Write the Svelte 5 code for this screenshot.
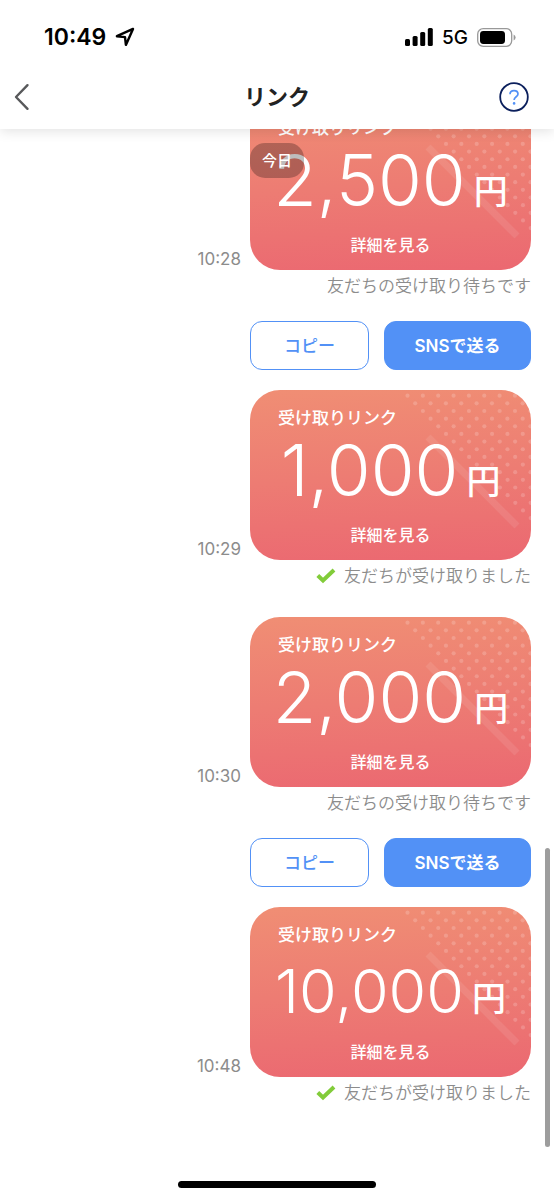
<script>
  const links = [
    { time: '10:28', amount: '2,500', received: false },
    { time: '10:29', amount: '1,000', received: true },
    { time: '10:30', amount: '2,000', received: false },
    { time: '10:48', amount: '10,000', received: true },
  ];

  // Triangular dot field in the upper right of each card: every row starts one half-step further right.
  const dots = [];
  for (let row = 0; row < 17; row++) {
    for (let x = 157.5 + row * 7.7; x < 284; x += 15.35) {
      dots.push({ x, y: 5.7 + row * 7.65 });
    }
  }
</script>

<div class="screen">
  <header>
    <div class="status">
      <div class="group">
        <span class="clock">10:49</span>
        <svg width="20" height="20" viewBox="0 0 20 20" aria-hidden="true">
          <path d="M18 1.9 1.9 9.2 10 10.1 10.9 17.9Z" fill="none" stroke="#000" stroke-width="2.4" stroke-linejoin="round" />
        </svg>
      </div>
      <div class="group right">
        <svg width="28" height="18" viewBox="0 0 28 18" aria-hidden="true">
          <rect x="0" y="11" width="5" height="7" rx="1.5" />
          <rect x="7.6" y="8" width="5" height="10" rx="1.5" />
          <rect x="15.2" y="4" width="5" height="14" rx="1.5" />
          <rect x="22.8" y="0" width="5" height="18" rx="1.5" />
        </svg>
        <span class="network">5G</span>
        <svg width="39" height="19" viewBox="0 0 39 19" aria-hidden="true">
          <rect x="0.7" y="0.7" width="34" height="17.6" rx="5.5" fill="none" stroke="#999" stroke-width="1.3" />
          <rect x="3" y="3" width="25" height="13" rx="3.4" />
          <path d="M36.6 6.5Q38.6 7.3 38.6 9.5T36.6 12.5Z" fill="#999" />
        </svg>
      </div>
    </div>
    <nav>
      <button class="icon" aria-label="戻る">
        <svg width="16" height="28" viewBox="0 0 16 28" aria-hidden="true">
          <path d="M13.5 2.2 2 14 13.5 25.8" fill="none" stroke="#58595b" stroke-width="2.4" stroke-linecap="round" stroke-linejoin="round" />
        </svg>
      </button>
      <h1>リンク</h1>
      <button class="icon help" aria-label="ヘルプ">
        <svg width="30" height="30" viewBox="0 0 30 30" aria-hidden="true">
          <circle cx="15" cy="15" r="13.8" fill="none" stroke="#0b1f5c" stroke-width="1.8" />
          <path d="M11 12.3C11 9.8 12.7 8.6 15 8.6S19 10 19 12C19 14.8 15.1 14.8 15.1 18" fill="none" stroke="#5291f6" stroke-width="1.7" />
          <circle cx="15.1" cy="21.4" r="1.3" fill="#5291f6" />
        </svg>
      </button>
    </nav>
  </header>

  <main>
    <span class="date">今日</span>
    {#each links as link}
      <article>
        <div class="row">
          <time>{link.time}</time>
          <section class="card">
            <svg class="pattern" width="281" height="170" viewBox="0 0 281 170" aria-hidden="true">
              {#each dots as dot}
                <circle cx={dot.x} cy={dot.y} r="2.1" fill="#fff" fill-opacity="0.18" />
              {/each}
              <path d="M178 47 267 136" stroke="#fff" stroke-opacity="0.09" stroke-width="7" />
            </svg>
            <h2>受け取りリンク</h2>
            <p class="amount"><span class="digits" class:long={link.amount.length > 5}>{link.amount}</span><span class="yen">円</span></p>
            <a href="#detail">詳細を見る</a>
          </section>
        </div>
        <p class="state">
          {#if link.received}
            <svg width="20" height="16" viewBox="0 0 20 16" aria-hidden="true">
              <path d="M1.8 7.5 7 12.5 18 2" fill="none" stroke="#82cc3a" stroke-width="4" />
            </svg>
            友だちが受け取りました
          {:else}
            友だちの受け取り待ちです
          {/if}
        </p>
        {#if !link.received}
          <div class="actions">
            <button class="copy">コピー</button>
            <button class="send">SNSで送る</button>
          </div>
        {/if}
      </article>
    {/each}
    <div class="thumb"></div>
  </main>

  <footer><div class="home"></div></footer>
</div>

<style>
  :global(body) {
    margin: 0;
    background: #fff;
  }
  .screen {
    display: flex;
    flex-direction: column;
    height: 100vh;
    overflow: hidden;
    font-family: Inter, "Noto Sans CJK JP", sans-serif;
    color: #222;
  }
  h1, h2, p {
    margin: 0;
  }
  button {
    font: inherit;
    cursor: pointer;
  }
  svg {
    display: block;
    flex: none;
  }
  header {
    position: relative;
    z-index: 2;
    flex: none;
    background: #fff;
    box-shadow: 0 2px 12px rgba(0, 0, 0, 0.12);
  }
  .status {
    display: flex;
    justify-content: space-between;
    align-items: center;
    padding: 22px 38px 0 44px;
    height: 30px;
    color: #000;
  }
  .group {
    display: flex;
    align-items: center;
    gap: 9px;
  }
  .clock {
    font-size: 23px;
    font-weight: 600;
  }
  .network {
    font-size: 19px;
    font-weight: 500;
  }
  nav {
    display: grid;
    grid-template-columns: 60px 1fr 60px;
    align-items: center;
    height: 64px;
    padding-top: 13px;
  }
  h1 {
    font-size: 22px;
    font-weight: 700;
    line-height: 32px;
    text-align: center;
  }
  .icon {
    display: flex;
    padding: 0 0 0 14px;
    border: 0;
    background: none;
  }
  .help {
    padding: 0 25px 0 5px;
  }
  main {
    position: relative;
    flex: 1;
    min-height: 0;
    display: flex;
    flex-direction: column;
    justify-content: flex-end;
    gap: 25px;
    padding: 0 23px 41px;
    overflow: hidden;
  }
  .date {
    position: absolute;
    z-index: 1;
    top: 14px;
    left: 50%;
    transform: translateX(-50%);
    padding: 0 12px;
    border-radius: 15px;
    background: rgba(0, 0, 0, 0.26);
    color: #fff;
    font-size: 15px;
    font-weight: 500;
    line-height: 35px;
    white-space: nowrap;
  }
  article {
    flex: none;
    display: flex;
    flex-direction: column;
    align-items: flex-end;
  }
  .row {
    display: flex;
    align-items: flex-end;
    gap: 9px;
  }
  time {
    color: #8c8c8c;
    font-size: 17px;
    font-weight: 400;
    line-height: 22px;
  }
  .card {
    position: relative;
    box-sizing: border-box;
    width: 281px;
    height: 170px;
    padding-top: 16px;
    border-radius: 30px;
    overflow: hidden;
    background: linear-gradient(177deg, #f08e74 0%, #ed7c73 50%, #eb6871 100%);
    color: #fff;
    text-align: center;
  }
  .pattern {
    position: absolute;
    inset: 0;
  }
  h2, .amount, .card a {
    position: relative;
  }
  h2 {
    padding-left: 28px;
    font-size: 17px;
    font-weight: 500;
    line-height: 24px;
    text-align: left;
  }
  .amount {
    height: 93px;
    font-size: 34px;
    line-height: 108px;
    white-space: nowrap;
  }
  .digits, .yen {
    line-height: 0;
  }
  .digits {
    font-size: 71px;
    font-weight: 350;
  }
  .digits.long {
    font-size: 61px;
  }
  .yen {
    margin-left: 8px;
    font-weight: 500;
    vertical-align: 2px;
  }
  .card a {
    display: block;
    color: inherit;
    font-size: 16px;
    font-weight: 500;
    line-height: 24px;
    text-decoration: none;
  }
  .state {
    display: flex;
    align-items: center;
    gap: 8px;
    color: #8c8c8c;
    font-size: 17px;
    font-weight: 350;
    line-height: 32px;
  }
  .actions {
    display: grid;
    grid-template-columns: 119px 147px;
    gap: 15px;
    padding: 19px 0 0;
    margin-bottom: -5px;
  }
  .actions button {
    height: 49px;
    padding: 0 0 3px;
    border: 1px solid #5291f6;
    border-radius: 12px;
    background: #fff;
    color: #5291f6;
    font-size: 17px;
    font-weight: 500;
  }
  .actions .send {
    background: #5291f6;
    color: #fff;
    font-weight: 600;
  }
  .thumb {
    position: absolute;
    right: 4px;
    bottom: 3px;
    width: 5px;
    height: 299px;
    border-radius: 3px;
    background: #9d9d9d;
  }
  footer {
    flex: none;
    display: flex;
    justify-content: center;
    align-items: flex-end;
    height: 50px;
  }
  .home {
    width: 198px;
    height: 7px;
    margin-bottom: 12px;
    border-radius: 4px;
    background: #000;
  }
</style>
